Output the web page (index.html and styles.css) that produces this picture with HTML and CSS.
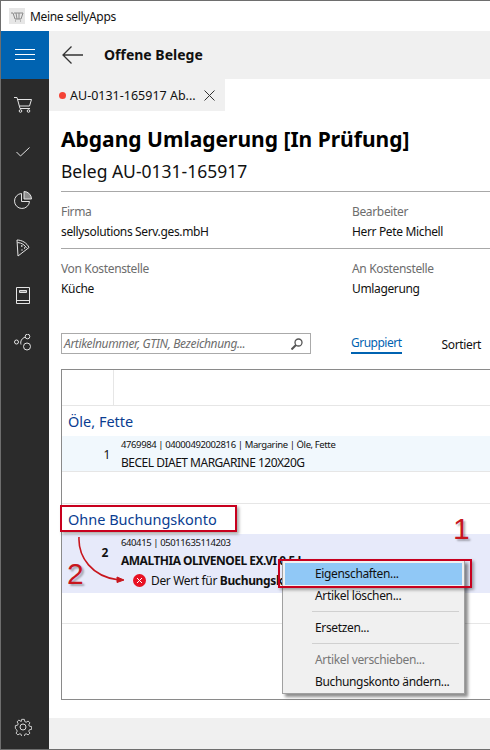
FILE: index.html
```html
<!DOCTYPE html>
<html lang="de">
<head>
    <meta charset="UTF-8">
    <title>Meine sellyApps</title>
    <link rel="stylesheet" href="styles.css">
</head>
<body>
    <div class="window">
        <div class="titlebar">
            <svg class="app-icon" width="16" height="16" viewBox="0 0 16 16">
                <rect width="16" height="16" fill="#e6e6e6"/>
                <path d="M2 5h2l2 6h6l2-6H5M6 13h1M11 13h1M7 5l1 6M10 5v6" fill="none" stroke="#8a8a8a"/>
            </svg>
            <span>Meine sellyApps</span>
        </div>
        <div class="main">
            <nav class="sidebar">
                <div class="menu-btn">
                    <svg width="20" height="12" viewBox="0 0 20 12"><path d="M0 .5h20M0 5.5h20M0 10.500h20" stroke="#fff"/></svg>
                </div>
                <div class="nav-item">
                    <svg width="18" height="16" viewBox="0 0 18 16" fill="none" stroke="#e4e4e4"><path d="M0 .5h3l3 11h10M3.500 2.500h14l-2 6.500H5.500"/><circle cx="6.500" cy="14" r="1.300"/><circle cx="14.500" cy="14" r="1.300"/></svg>
                </div>
                <div class="nav-item">
                    <svg width="14" height="10" viewBox="0 0 14 10" fill="none" stroke="#e4e4e4"><path d="M.5 5l4 4 9-8.500"/></svg>
                </div>
                <div class="nav-item">
                    <svg width="18" height="18" viewBox="0 0 18 18" fill="none" stroke="#e4e4e4"><path d="M7.500 2.500a7.500 7.500 0 1 0 8 8h-8z"/><path d="M10 .5a7.500 7.500 0 0 1 7.500 7.500H10z" fill="#8c8c8c"/></svg>
                </div>
                <div class="nav-item">
                    <svg width="14" height="18" viewBox="0 0 14 18" fill="none" stroke="#e4e4e4"><path d="M1 1c5 0 10 3 12 7.500L2 17z"/><path d="M1.500 3.500c4 .2 7.500 2.500 9 5.500"/><path d="M5 7h1.500M8 9h1M5.500 11h1" stroke-width="1.300"/></svg>
                </div>
                <div class="nav-item">
                    <svg width="14" height="17" viewBox="0 0 14 17" fill="none" stroke="#e4e4e4"><path d="M.5.500h13v16H.5zM.5 13.500h13"/><path d="M3.500 3.500h7v2h-7z" fill="#8c8c8c"/></svg>
                </div>
                <div class="nav-item">
                    <svg width="18" height="17" viewBox="0 0 18 17" fill="none" stroke="#e4e4e4"><circle cx="2.500" cy="8" r="2"/><circle cx="13.500" cy="2.500" r="2.300"/><circle cx="13" cy="12.500" r="3.500"/><path d="M7 10.500C6 7 8 4 11.300 3.200"/></svg>
                </div>
                <div class="nav-spacer"></div>
                <div class="nav-item nav-item-gear">
                    <svg width="18" height="18" viewBox="0 0 18 18" fill="none" stroke="#dcdcdc"><circle cx="9" cy="9" r="3"/><path d="M7.500.5h3l.5 2.500 1.500.7 2.200-1.300 2 2-1.300 2.200.7 1.500 2.500.5v3l-2.500.5-.7 1.500 1.300 2.200-2 2-2.200-1.300-1.500.7-.5 2.500h-3l-.5-2.500-1.500-.7-2.200 1.300-2-2 1.300-2.200-.7-1.500L.5 10.500v-3L3 7l.7-1.500L2.400 3.300l2-2 2.200 1.300L7 3z" transform="translate(.9 .9) scale(.9)"/></svg>
                </div>
            </nav>
            <div class="content">
                <header class="topbar">
                    <svg width="21" height="18" viewBox="0 0 21 18" fill="none" stroke="#333" stroke-width="1.300"><path d="M21 9H1M9.500.5L1 9l8.500 8.500"/></svg>
                    <h2 class="topbar-title">Offene Belege</h2>
                </header>
                <div class="tabs">
                    <div class="tab">
                        <span class="tab-dot"></span>
                        <span class="tab-label">AU-0131-165917 Ab...</span>
                        <svg width="11" height="11" viewBox="0 0 11 11" stroke="#333"><path d="M.5.5l10 10M10.500.5l-10 10"/></svg>
                    </div>
                </div>
                <div class="doc">
                    <h1 class="doc-title">Abgang Umlagerung [In Prüfung]</h1>
                    <div class="doc-sub">Beleg AU-0131-165917</div>
                    <div class="meta">
                        <div class="meta-cell"><div class="meta-label">Firma</div><div class="meta-value">sellysolutions Serv.ges.mbH</div></div>
                        <div class="meta-cell"><div class="meta-label">Bearbeiter</div><div class="meta-value">Herr Pete Michell</div></div>
                    </div>
                    <div class="meta">
                        <div class="meta-cell"><div class="meta-label">Von Kostenstelle</div><div class="meta-value">Küche</div></div>
                        <div class="meta-cell"><div class="meta-label">An Kostenstelle</div><div class="meta-value">Umlagerung</div></div>
                    </div>
                    <div class="toolbar">
                        <div class="search">
                            <span class="search-text">Artikelnummer, GTIN, Bezeichnung...</span>
                            <svg width="12" height="12" viewBox="0 0 12 12" fill="none" stroke="#555" stroke-width="1.300"><circle cx="7.500" cy="4.500" r="3.500"/><path d="M5 7l-4.500 4.500" stroke-width="2"/></svg>
                        </div>
                        <span class="view-tab view-tab-active">Gruppiert</span>
                        <span class="view-tab">Sortiert</span>
                    </div>
                    <div class="table">
                        <div class="table-head"><div class="table-head-cell"></div></div>
                        <div class="group-title">Öle, Fette</div>
                        <div class="row row-light">
                            <div class="row-num">1</div>
                            <div class="row-body">
                                <div class="row-meta">4769984 | 04000492002816 | Margarine | Öle, Fette</div>
                                <div class="row-name">BECEL DIAET MARGARINE 120X20G</div>
                            </div>
                        </div>
                        <div class="group-gap"></div>
                        <div class="group-title">Ohne Buchungskonto</div>
                        <div class="row row-selected">
                            <div class="row-num row-num-bold">2</div>
                            <div class="row-body">
                                <div class="row-meta">640415 | 05011635114203</div>
                                <div class="row-name row-name-bold">AMALTHIA OLIVENOEL EX.VI 0,5 L</div>
                                <div class="row-error">
                                    <svg width="13" height="13" viewBox="0 0 13 13"><circle cx="6.500" cy="6.500" r="6.500" fill="#e81123"/><path d="M4 4l5 5M9 4l-5 5" stroke="#fff"/></svg>
                                    <span>Der Wert für <b>Buchungsk</b></span>
                                </div>
                            </div>
                        </div>
                        <div class="group-gap group-gap-last"></div>
                    </div>
                </div>
                <div class="footer"></div>
            </div>
        </div>

        <ul class="context-menu">
            <li class="menu-item menu-item-active">Eigenschaften...</li>
            <li class="menu-item">Artikel löschen...</li>
            <li class="menu-sep"></li>
            <li class="menu-item">Ersetzen...</li>
            <li class="menu-sep"></li>
            <li class="menu-item menu-item-disabled">Artikel verschieben...</li>
            <li class="menu-item">Buchungskonto ändern...</li>
        </ul>

        <div class="mark mark-group"></div>
        <div class="mark mark-menu"></div>
        <span class="mark-num mark-num-1">1</span>
        <span class="mark-num mark-num-2">2</span>
        <svg class="mark-arrow" width="50" height="50" viewBox="0 0 50 50" fill="none" stroke="#c8161d" stroke-width="1.600">
            <path d="M1 0c-1 20 13 40 40 43"/>
            <path d="M39 40l7 3-7 2.500z" fill="#c8161d" stroke-width="1"/>
        </svg>
    </div>
</body>
</html>
```

FILE: styles.css
```css
* {
    box-sizing: border-box;
}
body {
    margin: 0;
    font-family: 'Noto Sans', 'Open Sans', sans-serif;
    font-size: 12px;
    letter-spacing: -0.35px;
    color: #111;
    background: #fff;
}
.window {
    position: relative;
    width: 490px;
    height: 750px;
    overflow: hidden;
    border-top: 1px solid #6e6e6e;
    border-left: 1px solid #6e6e6e;
    border-bottom: 1px solid #6e6e6e;
    display: flex;
    flex-direction: column;
}
.titlebar {
    height: 30px;
    flex: none;
    display: flex;
    align-items: center;
    gap: 5px;
    padding-left: 8px;
    background: #fff;
}
.main {
    flex: 1;
    display: flex;
    min-height: 0;
}
.sidebar {
    width: 48px;
    flex: none;
    background: #2b2b2b;
    display: flex;
    flex-direction: column;
}
.menu-btn {
    height: 48px;
    margin-bottom: 2px;
    background: #0063b1;
    display: flex;
    align-items: center;
    justify-content: center;
}
.nav-item {
    height: 47.600px;
    flex: none;
    padding-right: 5px;
    display: flex;
    align-items: center;
    justify-content: center;
}
.nav-item-gear {
    height: 44px;
}
.nav-spacer {
    flex: 1;
}
.content {
    flex: 1;
    min-width: 0;
    display: flex;
    flex-direction: column;
}
.topbar {
    height: 48px;
    flex: none;
    background: #f0f0f0;
    display: flex;
    align-items: center;
    padding-left: 13px;
    gap: 21px;
}
.topbar-title {
    margin: 0 0 2px;
    font-size: 14px;
    font-weight: 700;
    letter-spacing: 0;
    color: #111;
}
.tabs {
    height: 32px;
    flex: none;
}
.tab {
    width: 176px;
    height: 32px;
    background: #f0f0f0;
    display: flex;
    align-items: center;
    padding-left: 10px;
    gap: 4px;
}
.tab-dot {
    width: 7px;
    height: 7px;
    border-radius: 50%;
    background: #f44336;
    flex: none;
}
.tab-label {
    font-size: 12.500px;
    letter-spacing: 0;
    margin-right: 4px;
    white-space: nowrap;
}
.doc {
    flex: 1;
    min-height: 0;
    padding: 13px 0 18px 12px;
    display: flex;
    flex-direction: column;
}
.doc-title {
    margin: 0;
    font-size: 21px;
    line-height: 30px;
    font-weight: 700;
    letter-spacing: 0;
    color: #000;
    white-space: nowrap;
}
.doc-sub {
    font-size: 17.500px;
    line-height: 26px;
    letter-spacing: 0;
    margin-top: 4px;
    margin-bottom: 7px;
    color: #111;
}
.meta {
    display: grid;
    grid-template-columns: 291px 1fr;
    height: 57px;
    flex: none;
    border-top: 1px solid #a8a8a8;
    padding-top: 10px;
}
.meta-label {
    color: #6d6d6d;
    line-height: 20px;
}
.meta-value {
    line-height: 20px;
}
.toolbar {
    display: flex;
    align-items: center;
    flex: none;
    margin-top: 28px;
    height: 21px;
}
.search {
    width: 250px;
    height: 21px;
    flex: none;
    border: 1px solid #aaa;
    display: flex;
    align-items: center;
    justify-content: space-between;
    padding: 0 7px 0 2px;
    margin-right: 40px;
}
.search-text {
    font-style: italic;
    color: #6d6d6d;
    white-space: nowrap;
}
.view-tab {
    line-height: 18px;
    padding-top: 2px;
}
.view-tab-active {
    color: #0063b1;
    border-bottom: 2px solid #0063b1;
    letter-spacing: -0.5px;
    margin-right: 40px;
    padding-top: 0;
}
.table {
    margin-top: 15px;
    flex: 1;
    border-top: 1px solid #8a8a8a;
    border-left: 1px solid #8a8a8a;
    border-bottom: 1px solid #8a8a8a;
}
.table-head {
    height: 36px;
    border-bottom: 1px solid #e6e6e6;
}
.table-head-cell {
    width: 52px;
    height: 35px;
    border-right: 1px solid #e6e6e6;
}
.group-title {
    font-size: 14.500px;
    line-height: 30px;
    letter-spacing: 0;
    color: #0a3d91;
    padding-left: 6px;
}
.row {
    display: flex;
}
.row-light {
    background: #f1f8fd;
    height: 36px;
    border-bottom: 1px solid #e6e6e6;
}
.row-selected {
    background: #e7eafa;
    height: 59px;
}
.row-num {
    width: 59px;
    padding-top: 10px;
    padding-right: 11px;
    text-align: right;
}
.row-num-bold {
    font-weight: 700;
    padding-right: 13px;
}
.row-body {
    min-width: 0;
}
.row-meta {
    font-size: 9.500px;
    letter-spacing: -0.4px;
    line-height: 14px;
    padding-top: 2px;
    height: 18px;
    white-space: nowrap;
}
.row-name {
    line-height: 18px;
    letter-spacing: -0.5px;
    white-space: nowrap;
}
.row-name-bold {
    font-weight: 700;
}
.row-error {
    display: flex;
    align-items: center;
    gap: 5px;
    margin-left: 12px;
    margin-top: 2px;
    white-space: nowrap;
}
.group-gap {
    height: 32px;
    border-bottom: 1px solid #e6e6e6;
}
.group-gap-last {
    height: 31px;
}
.footer {
    height: 31px;
    flex: none;
    background: #f0f0f0;
}

/* context menu and the red marks lie over the list */
.context-menu {
    position: absolute;
    left: 281px;
    top: 559px;
    width: 183px;
    height: 134px;
    margin: 0;
    padding: 2px;
    list-style: none;
    background: #f0f0f0;
    border: 1px solid #a0a0a0;
    box-shadow: 3px 3px 3px rgba(0, 0, 0, 0.45);
}
.menu-item {
    height: 22px;
    line-height: 22px;
    padding-left: 30px;
    white-space: nowrap;
}
.menu-item-active {
    background: #90c8f6;
}
.menu-item-disabled {
    color: #777;
}
.menu-sep {
    height: 1px;
    margin: 4px 3px 5px 27px;
    background: #d0d0d0;
}
.mark {
    position: absolute;
    border: 2px solid #c8001e;
    box-shadow: 2px 2px 3px rgba(0, 0, 0, 0.35);
}
.mark-group {
    left: 59px;
    top: 504px;
    width: 177px;
    height: 27px;
}
.mark-menu {
    left: 277px;
    top: 558px;
    width: 194px;
    height: 29px;
}
.mark-num {
    position: absolute;
    color: #c8161d;
    font-family: 'Liberation Sans', sans-serif;
    letter-spacing: 0;
    text-shadow: 2px 2px 2px rgba(0, 0, 0, 0.3);
}
.mark-num-1 {
    left: 452px;
    top: 512px;
    font-size: 30px;
    line-height: 32px;
}
.mark-num-2 {
    left: 66px;
    top: 557px;
    font-size: 30px;
    line-height: 32px;
}
.mark-arrow {
    position: absolute;
    left: 77px;
    top: 536px;
}
```
